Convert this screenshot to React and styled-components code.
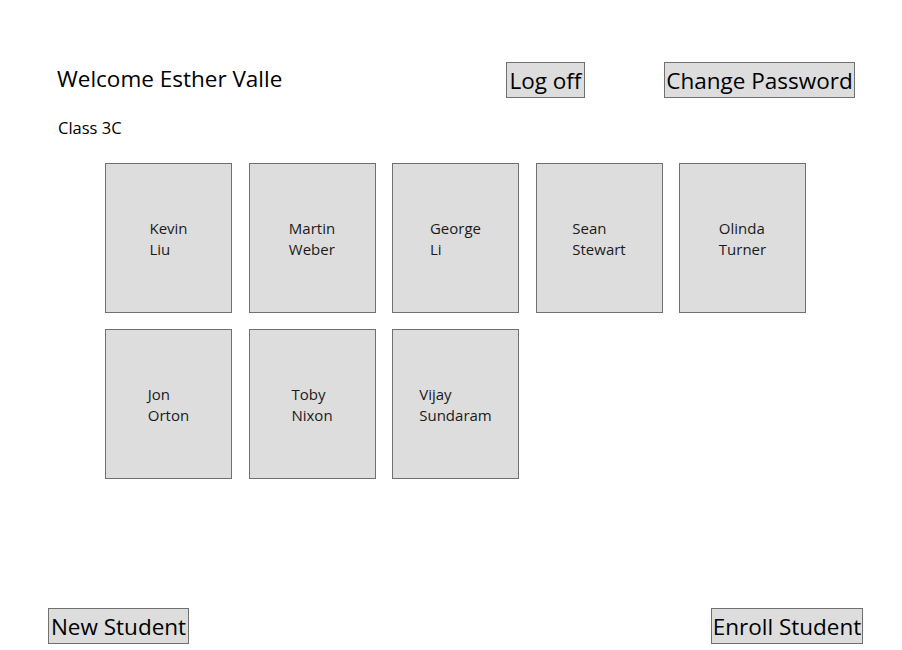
import React from "react";
import styled, { createGlobalStyle } from "styled-components";

const Global = createGlobalStyle`
  html, body { margin: 0; padding: 0; background: #ffffff; }
  body { font-family: "Open Sans", "Noto Sans", "Liberation Sans", sans-serif; color: #000; }
`;

const Page = styled.div`
  width: 902px;
  height: 650px;
  display: flex;
  flex-direction: column;
  box-sizing: border-box;
  padding: 62px 0 6px 0;
`;

const TopBar = styled.div`
  display: flex;
  align-items: flex-start;
  padding: 0 47px 0 57px;
`;

const Title = styled.div`
  flex: 1;
  font-size: 22.5px;
  line-height: 36px;
  margin-top: -1px;
`;

const Button = styled.button`
  box-sizing: border-box;
  width: ${(p) => p.$w}px;
  height: 36px;
  margin-left: ${(p) => p.$ml || 0}px;
  padding: 1px 0 0 0;
  background: #dddddd;
  border: 1px solid #707070;
  border-radius: 0;
  font-family: inherit;
  font-size: 22.5px;
  line-height: 33px;
  color: #000;
  text-align: center;
  white-space: nowrap;
`;

const ClassLabel = styled.div`
  margin: 19px 0 0 58px;
  font-size: 16.5px;
  line-height: 22px;
`;

const Grid = styled.div`
  display: grid;
  grid-template-columns: repeat(5, 127px);
  column-gap: 16.5px;
  row-gap: 16px;
  margin: 24px 0 0 105px;
`;

const Tile = styled.div`
  box-sizing: border-box;
  width: 127px;
  height: 150px;
  padding-top: 2px;
  background: #dddddd;
  border: 1px solid #707070;
  display: flex;
  align-items: center;
  justify-content: center;
`;

const Name = styled.div`
  font-size: 15px;
  line-height: 21px;
  color: #1a1a1a;
  text-align: left;
`;

const Footer = styled.div`
  margin-top: auto;
  display: flex;
  justify-content: space-between;
  padding: 0 39px 0 48px;
`;

const students = [
  ["Kevin", "Liu"],
  ["Martin", "Weber"],
  ["George", "Li"],
  ["Sean", "Stewart"],
  ["Olinda", "Turner"],
  ["Jon", "Orton"],
  ["Toby", "Nixon"],
  ["Vijay", "Sundaram"],
];

export default function App() {
  return (
    <>
      <Global />
      <Page>
        <TopBar>
          <Title>Welcome Esther Valle</Title>
          <Button $w={79}>Log off</Button>
          <Button $w={191} $ml={79}>Change Password</Button>
        </TopBar>
        <ClassLabel>Class 3C</ClassLabel>
        <Grid>
          {students.map(([first, last]) => (
            <Tile key={first + last}>
              <Name>
                {first}
                <br />
                {last}
              </Name>
            </Tile>
          ))}
        </Grid>
        <Footer>
          <Button $w={141}>New Student</Button>
          <Button $w={152}>Enroll Student</Button>
        </Footer>
      </Page>
    </>
  );
}
